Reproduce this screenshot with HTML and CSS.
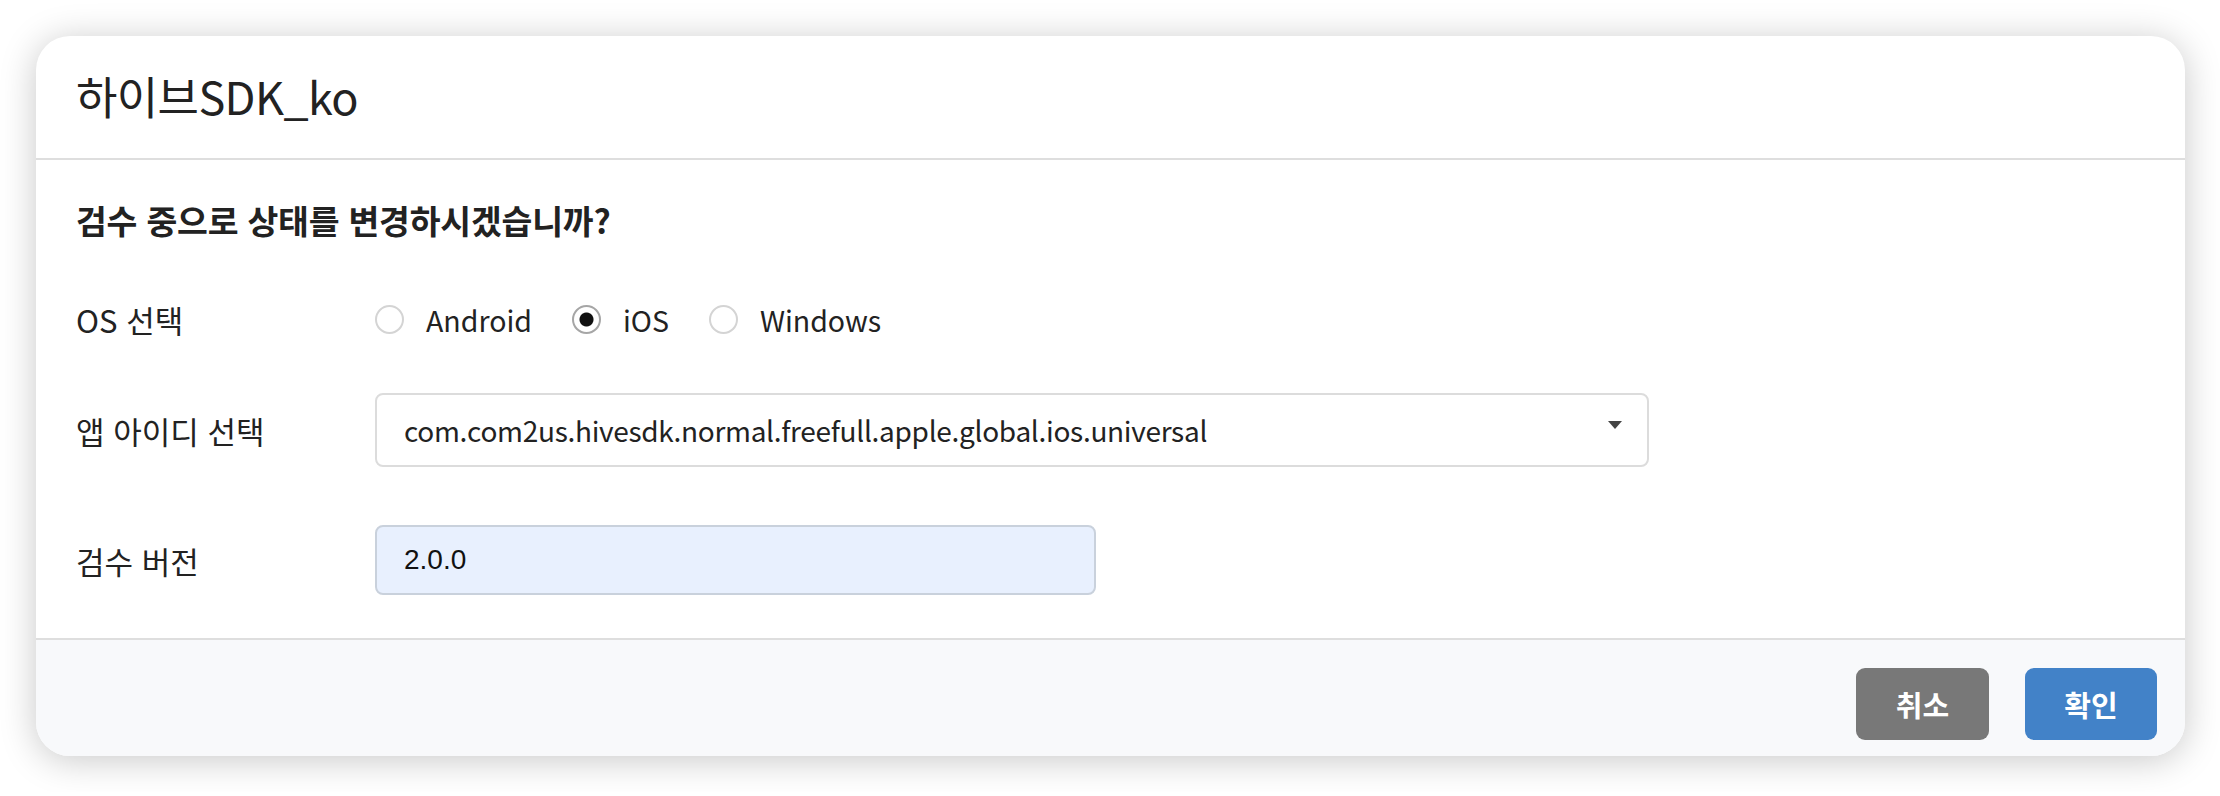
FILE: index.html
```html
<!DOCTYPE html>
<html lang="ko">
<head>
  <meta charset="UTF-8">
  <meta name="viewport" content="width=device-width, initial-scale=1.0">
  <title>검수 상태 변경</title>
  <link rel="stylesheet" href="styles.css">
</head>
<body>

  <!-- Review status dialog -->
  <div class="modal">
    <div class="modal-header">
      <div class="modal-title">하이브SDK_ko</div>
    </div>

    <div class="modal-body">
      <div class="question">검수 중으로 상태를 변경하시겠습니까?</div>

      <div class="form-row os-row">
        <div class="label">OS 선택</div>
        <div class="radios">
          <label class="radio"><input type="radio" name="os" value="android"> Android</label>
          <label class="radio"><input type="radio" name="os" value="ios" checked> iOS</label>
          <label class="radio"><input type="radio" name="os" value="windows"> Windows</label>
        </div>
      </div>

      <div class="form-row select-row">
        <div class="label">앱 아이디 선택</div>
        <div class="select">
          <span>com.com2us.hivesdk.normal.freefull.apple.global.ios.universal</span>
          <span class="caret"></span>
        </div>
      </div>

      <div class="form-row version-row">
        <div class="label">검수 버전</div>
        <input type="text" class="version-input" value="2.0.0">
      </div>
    </div>

    <div class="modal-footer">
      <button class="btn btn-cancel">취소</button>
      <button class="btn btn-ok">확인</button>
    </div>
  </div>

</body>
</html>
```

FILE: styles.css
```css
    body {
      font-family: "Noto Sans CJK KR", "Noto Sans", sans-serif;
      margin: 0;
      padding: 36px 35px 36px 36px;
      background-color: #fff;
      color: #222;
    }
    .modal {
      background-color: #fff;
      border-radius: 34px;
      box-shadow: 0 4px 36px rgba(0, 0, 0, 0.22);
      overflow: hidden;
    }
    .modal-header {
      height: 122px;
      display: flex;
      align-items: center;
      padding-left: 40px;
      border-bottom: 2px solid #dedede;
    }
    .modal-title {
      font-size: 45px;
      letter-spacing: -0.6px;
      color: #222;
      margin-top: -4px;
    }
    .modal-body {
      padding: 37px 40px 41px;
    }
    .question {
      font-size: 33.5px;
      line-height: 46px;
      font-weight: bold;
      letter-spacing: -0.2px;
      margin-bottom: 39px;
    }
    .form-row {
      display: flex;
      align-items: center;
      height: 74px;
    }
    .select-row {
      margin-top: 37px;
    }
    .version-row {
      margin-top: 56px;
    }
    .label {
      width: 299px;
      font-size: 31px;
      letter-spacing: 0;
    }
    .radios {
      display: flex;
      align-items: center;
    }
    .radio {
      display: flex;
      align-items: center;
      font-size: 28.5px;
      margin-right: 40px;
    }
    .radio input {
      appearance: none;
      width: 29px;
      height: 29px;
      margin: 0 22px 0 0;
      border: 2px solid #d4d4d4;
      border-radius: 50%;
      background-color: #fff;
    }
    .radio input:checked {
      border-color: #a6a6a6;
      background: radial-gradient(circle, #111 0 6.5px, #fff 7.5px);
    }
    .select {
      width: 1274px;
      height: 74px;
      box-sizing: border-box;
      border: 2px solid #dcdcdc;
      border-radius: 8px;
      display: flex;
      align-items: center;
      justify-content: space-between;
      padding: 0 25px 0 27px;
      font-size: 28px;
      letter-spacing: -0.3px;
    }
    .caret {
      width: 0;
      height: 0;
      border-left: 7px solid transparent;
      border-right: 7px solid transparent;
      border-top: 8px solid #444;
      margin-bottom: 10px;
    }
    .version-input {
      width: 721px;
      height: 70px;
      box-sizing: border-box;
      border: 2px solid #c9d1dc;
      border-radius: 8px;
      background-color: #e8f0fe;
      padding: 0 27px;
      font-family: "Liberation Sans", "Noto Sans", sans-serif;
      font-size: 28px;
      color: #111;
      outline: none;
    }
    .modal-footer {
      background-color: #f8f9fb;
      border-top: 2px solid #dedede;
      height: 118px;
      display: flex;
      justify-content: flex-end;
      align-items: flex-start;
      padding: 28px 28px 0 0;
      box-sizing: border-box;
      gap: 36px;
    }
    .btn {
      height: 72px;
      border: none;
      border-radius: 9px;
      color: white;
      font-family: "Noto Sans CJK KR", sans-serif;
      font-size: 29px;
      font-weight: bold;
    }
    .btn-cancel {
      width: 133px;
      background-color: #787878;
    }
    .btn-ok {
      width: 132px;
      background-color: #4282c8;
    }
```
